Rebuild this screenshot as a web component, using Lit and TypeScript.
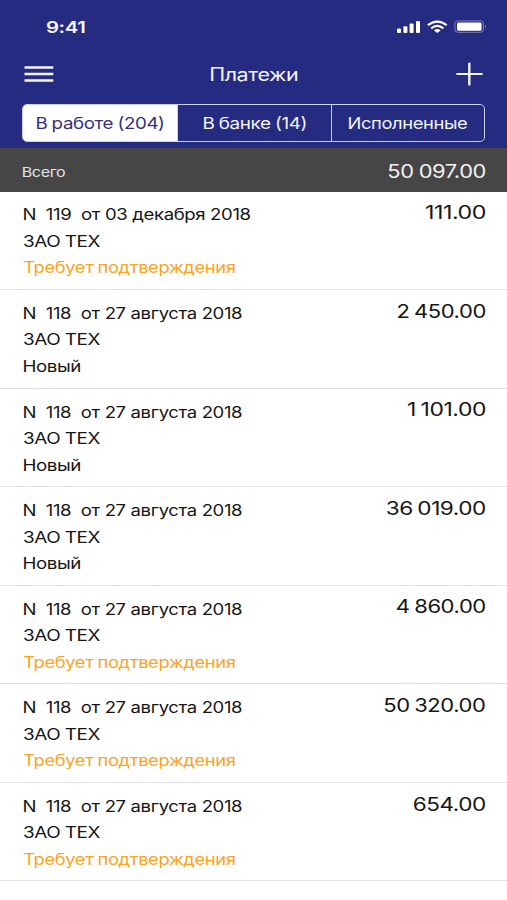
import { LitElement, html, css } from "lit";
import { customElement, property, query } from "lit/decorators.js";

/** A single line of text whose glyphs are widened to span exactly `width` pixels. */
@customElement("wide-text")
class WideText extends LitElement {
  @property({ type: Number }) width = 0;
  @property() text = "";
  @query(".line") private line!: HTMLElement;

  static styles = css`
    :host {
      display: block;
      flex: none;
    }
    .line {
      display: inline-block;
      white-space: pre;
      letter-spacing: -0.02em;
      transform-origin: 0 50%;
    }
  `;

  protected updated() {
    const cs = getComputedStyle(this);
    const ctx = document.createElement("canvas").getContext("2d")!;
    // Measured at ten times the size, so that the ink bounds keep their fractions.
    const size = parseFloat(cs.fontSize) * 10;
    ctx.font = `${cs.fontWeight} ${size}px ${cs.fontFamily}`;
    ctx.letterSpacing = `${-0.02 * size}px`;
    ctx.wordSpacing = `${parseFloat(cs.wordSpacing) * 10 || 0}px`;
    const m = ctx.measureText(this.text);
    const left = m.actualBoundingBoxLeft / 10;
    const scale = this.width / (m.actualBoundingBoxRight / 10 + left);
    this.style.width = `${this.width}px`;
    this.line.style.transform = `translateX(${left * scale}px) scaleX(${scale})`;
  }

  render() {
    return html`<span class="line">${this.text}</span>`;
  }
}

interface Payment {
  title: string;
  titleWidth: number;
  confirm: boolean;
  amount: string;
  amountWidth: number;
}

const august = (amount: string, amountWidth: number, confirm: boolean): Payment => ({
  title: "N  118  от 27 августа 2018",
  titleWidth: 217.5,
  confirm,
  amount,
  amountWidth,
});

const payments: Payment[] = [
  { title: "N  119  от 03 декабря 2018", titleWidth: 226, confirm: true, amount: "111.00", amountWidth: 59 },
  august("2 450.00", 87, false),
  august("1 101.00", 77, false),
  august("36 019.00", 98, false),
  august("4 860.00", 88, true),
  august("50 320.00", 99.5, true),
  august("654.00", 71, true),
];

@customElement("app-root")
class AppRoot extends LitElement {
  static styles = css`
    :host {
      display: block;
      width: 507px;
      height: 900px;
      overflow: hidden;
      background: #fff;
      color: #161616;
      font-family: Inter, "Liberation Sans", sans-serif;
      font-size: 15.5px;
      line-height: 26.5px;
      word-spacing: -0.5px;
    }
    svg {
      display: block;
    }
    .header {
      box-sizing: border-box;
      height: 147.5px;
      background: #262b82;
      color: #f4f5ff;
      display: flex;
      flex-direction: column;
    }
    .status {
      box-sizing: border-box;
      height: 52px;
      padding: 2px 20px 0 46.5px;
      display: flex;
      align-items: center;
      justify-content: space-between;
    }
    .clock {
      font-size: 16px;
      font-weight: 600;
    }
    .nav {
      height: 44px;
      padding: 0 24px;
      display: grid;
      grid-template-columns: 1fr auto 1fr;
      align-items: center;
    }
    .nav svg:last-child {
      justify-self: end;
    }
    .title {
      font-size: 18px;
      padding-top: 2px;
    }
    .tabs {
      box-sizing: border-box;
      height: 38px;
      margin: 8px 22px 0;
      border: 1.5px solid #ccd0f5;
      border-radius: 5px;
      display: grid;
      grid-template-columns: 154px 154px 1fr;
      overflow: hidden;
      font-size: 16.5px;
    }
    .tab {
      display: flex;
      align-items: center;
      justify-content: center;
      border-left: 1px solid #ccd0f5;
    }
    .tab.active {
      background: #fff;
      color: #35307f;
      border-left: 0;
    }
    .total {
      box-sizing: border-box;
      height: 44px;
      padding: 0 22px 0 23.3px;
      background: #464646;
      color: #e4e4e4;
      display: flex;
      align-items: center;
      justify-content: space-between;
    }
    .label {
      font-size: 13.5px;
      padding-top: 5px;
    }
    .sum {
      font-size: 18.5px;
      padding-top: 3px;
      color: #f2f2f2;
    }
    .row {
      box-sizing: border-box;
      height: 98.57px;
      padding: 10.9px 22.5px 0 23.5px;
      border-bottom: 1.5px solid #e0e0e0;
      display: flex;
      justify-content: space-between;
    }
    .number {
      word-spacing: 0;
    }
    .amount {
      font-size: 18.5px;
      margin-top: -3.2px;
      word-spacing: -1px;
    }
    .confirm {
      color: #faa41f;
    }
  `;

  private row(p: Payment) {
    return html`
      <div class="row">
        <div>
          <wide-text class="number" .text=${p.title} .width=${p.titleWidth}></wide-text>
          <wide-text .text=${"ЗАО ТЕХ"} .width=${76}></wide-text>
          ${p.confirm
            ? html`<wide-text class="confirm" .text=${"Требует подтверждения"} .width=${210.5}></wide-text>`
            : html`<wide-text .text=${"Новый"} .width=${56}></wide-text>`}
        </div>
        <wide-text class="amount" .text=${p.amount} .width=${p.amountWidth}></wide-text>
      </div>
    `;
  }

  render() {
    return html`
      <div class="header">
        <div class="status">
          <wide-text class="clock" .text=${"9:41"} .width=${37.5}></wide-text>
          <svg width="91" height="14" viewBox="0 0 91 14" fill="#fff">
            <rect x="1" y="8.5" width="4" height="4.5" rx="1" />
            <rect x="7.4" y="6.2" width="4" height="6.8" rx="1" />
            <rect x="13.6" y="3.6" width="4" height="9.4" rx="1" />
            <rect x="20" y="1" width="4" height="12" rx="1" />
            <g fill="none" stroke="#fff" stroke-width="2.2">
              <path d="M31.9 5.2Q41.3 -2 50.7 5.2" />
              <path d="M35.2 8.3Q41.3 3.5 47.4 8.3" />
            </g>
            <path d="M38 10.4Q41.3 7.8 44.6 10.4L41.3 13Z" />
            <rect x="58.9" y="0.9" width="28.6" height="11.4" rx="3" fill="none" stroke="#fff" stroke-opacity="0.4" />
            <rect x="61" y="2.5" width="24.6" height="8.2" rx="1.5" />
            <path d="M89 4.8Q91 6.6 89 8.4Z" opacity="0.45" />
          </svg>
        </div>
        <div class="nav">
          <svg width="30" height="18" viewBox="0 0 30 18" stroke="#f4f5ff" stroke-width="2.5">
            <path d="M0.5 2.4H29.3M0.5 9H29.3M0.5 15.4H29.3" />
          </svg>
          <wide-text class="title" .text=${"Платежи"} .width=${86}></wide-text>
          <svg width="27" height="24" viewBox="0 0 27 24" stroke="#f4f5ff" stroke-width="2" stroke-linecap="round">
            <path d="M1.2 12H25.8" />
            <path d="M13.3 1.6V22.4" stroke-width="2.4" />
          </svg>
        </div>
        <div class="tabs">
          <div class="tab active"><wide-text .text=${"В работе (204)"} .width=${126}></wide-text></div>
          <div class="tab"><wide-text .text=${"В банке (14)"} .width=${101.5}></wide-text></div>
          <div class="tab"><wide-text .text=${"Исполненные"} .width=${118}></wide-text></div>
        </div>
      </div>
      <div class="total">
        <wide-text class="label" .text=${"Всего"} .width=${42}></wide-text>
        <wide-text class="sum" .text=${"50 097.00"} .width=${96}></wide-text>
      </div>
      ${payments.map((p) => this.row(p))}
    `;
  }
}
